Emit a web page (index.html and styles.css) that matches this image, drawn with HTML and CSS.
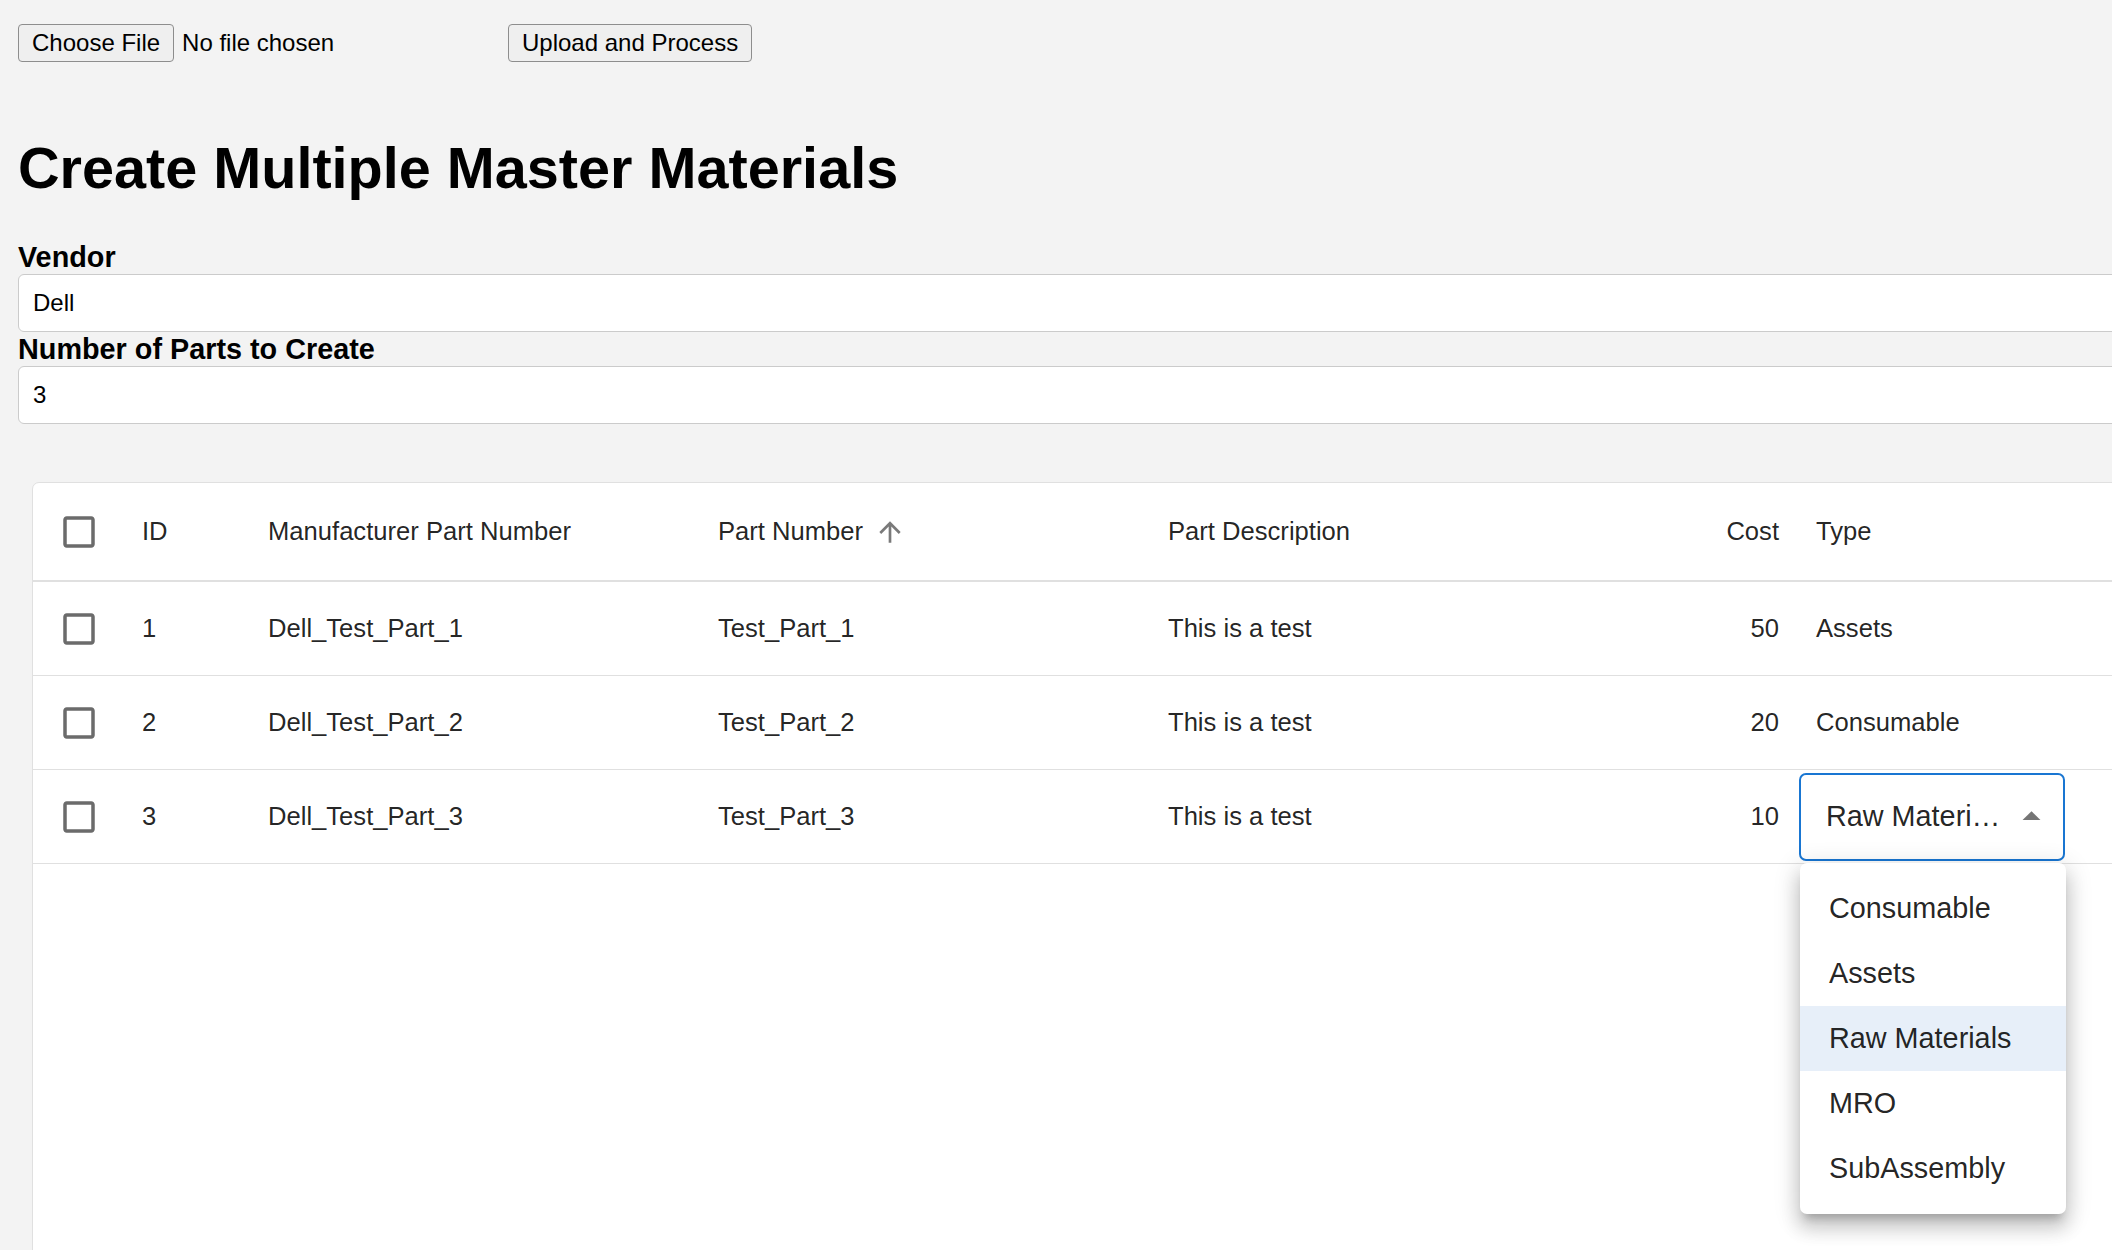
FILE: index.html
```html
<!DOCTYPE html>
<html lang="en">
<head>
<meta charset="utf-8">
<title>Create Multiple Master Materials</title>
<link rel="stylesheet" href="styles.css">
</head>
<body>
<div class="page">
  <form class="upload">
    <div class="file">
      <button type="button" class="btn">Choose File</button>
      <span class="file-status">No file chosen</span>
    </div>
    <button type="button" class="btn">Upload and Process</button>
  </form>

  <h1 class="title">Create Multiple Master Materials</h1>

  <div class="field">
    <label class="label">Vendor</label>
    <div class="input">Dell</div>
  </div>
  <div class="field">
    <label class="label">Number of Parts to Create</label>
    <div class="input">3</div>
  </div>

  <div class="grid">
    <div class="row header">
      <div class="cell check"><svg class="cb" viewBox="0 0 24 24"><path d="M19 5v14H5V5h14m0-2H5c-1.11 0-2 .9-2 2v14c0 1.1.89 2 2 2h14c1.1 0 2-.9 2-2V5c0-1.1-.9-2-2-2z"/></svg></div>
      <div class="cell">ID</div>
      <div class="cell">Manufacturer Part Number</div>
      <div class="cell">Part Number<svg class="sort" viewBox="0 0 24 24"><path d="M4 12l1.41 1.41L11 7.83V20h2V7.83l5.58 5.59L20 12l-8-8-8 8z"/></svg></div>
      <div class="cell">Part Description</div>
      <div class="cell num">Cost</div>
      <div class="cell">Type</div>
    </div>

    <div class="row">
      <div class="cell check"><svg class="cb" viewBox="0 0 24 24"><path d="M19 5v14H5V5h14m0-2H5c-1.11 0-2 .9-2 2v14c0 1.1.89 2 2 2h14c1.1 0 2-.9 2-2V5c0-1.1-.9-2-2-2z"/></svg></div>
      <div class="cell">1</div>
      <div class="cell">Dell_Test_Part_1</div>
      <div class="cell">Test_Part_1</div>
      <div class="cell">This is a test</div>
      <div class="cell num">50</div>
      <div class="cell">Assets</div>
    </div>

    <div class="row">
      <div class="cell check"><svg class="cb" viewBox="0 0 24 24"><path d="M19 5v14H5V5h14m0-2H5c-1.11 0-2 .9-2 2v14c0 1.1.89 2 2 2h14c1.1 0 2-.9 2-2V5c0-1.1-.9-2-2-2z"/></svg></div>
      <div class="cell">2</div>
      <div class="cell">Dell_Test_Part_2</div>
      <div class="cell">Test_Part_2</div>
      <div class="cell">This is a test</div>
      <div class="cell num">20</div>
      <div class="cell">Consumable</div>
    </div>

    <div class="row">
      <div class="cell check"><svg class="cb" viewBox="0 0 24 24"><path d="M19 5v14H5V5h14m0-2H5c-1.11 0-2 .9-2 2v14c0 1.1.89 2 2 2h14c1.1 0 2-.9 2-2V5c0-1.1-.9-2-2-2z"/></svg></div>
      <div class="cell">3</div>
      <div class="cell">Dell_Test_Part_3</div>
      <div class="cell">Test_Part_3</div>
      <div class="cell">This is a test</div>
      <div class="cell num">10</div>
      <div class="cell edit">
        <div class="select-wrap">
          <div class="select">
            <span class="select-value">Raw Materi…</span>
            <svg class="drop" viewBox="0 0 24 24"><path d="m7 14 5-5 5 5z"/></svg>
          </div>
          <ul class="menu">
            <li class="item">Consumable</li>
            <li class="item">Assets</li>
            <li class="item selected">Raw Materials</li>
            <li class="item">MRO</li>
            <li class="item">SubAssembly</li>
          </ul>
        </div>
      </div>
    </div>
  </div>
</div>
</body>
</html>
```

FILE: styles.css
```css
html, body {
  margin: 0;
  padding: 0;
  overflow: hidden;
  background: #f3f3f3;
}

body {
  font-family: "Liberation Sans", Arial, Helvetica, sans-serif;
  color: #000;
}

.page {
  width: 2240px;
  padding: 24px 0 0 18px;
}

/* upload row */
.upload {
  display: flex;
  align-items: center;
  margin: 0;
}

.file {
  width: 490px;
  display: flex;
  align-items: center;
  gap: 8px;
}

.btn {
  font-family: "Liberation Sans", Arial, sans-serif;
  font-size: 24px;
  line-height: 28px;
  height: 38px;
  padding: 0 13px;
  color: #000;
  background: #efefef;
  border: 1px solid #8d8d8d;
  border-radius: 4px;
  cursor: default;
}

.file-status {
  font-size: 24px;
  line-height: 28px;
}

/* title */
.title {
  font-size: 57.6px;
  line-height: 64px;
  font-weight: bold;
  margin: 74px 0 40px;
}

/* fields */
.field {
  display: flex;
  flex-direction: column;
}

.label {
  font-size: 28.8px;
  font-weight: bold;
  line-height: 34px;
  height: 34px;
}

.input {
  box-sizing: border-box;
  height: 58px;
  display: flex;
  align-items: center;
  padding: 0 14px;
  font-size: 24px;
  background: #fff;
  border: 1px solid #cbcbcb;
  border-radius: 6px;
}

/* data grid */
.grid {
  margin: 58px 0 0 14px;
  height: 900px;
  background: #fff;
  border: 1px solid #e0e0e0;
  border-radius: 7px;
  font-size: 25.6px;
  color: rgba(0, 0, 0, 0.87);
}

.row {
  box-sizing: border-box;
  display: grid;
  grid-template-columns: 91px 126px 450px 450px 450px 198px 270px;
  height: 94px;
  border-bottom: 1px solid #e0e0e0;
}

.row.header {
  height: 99px;
  border-bottom: 2px solid #e0e0e0;
}

.cell {
  display: flex;
  align-items: center;
  padding: 0 18px;
  white-space: nowrap;
}

.cell.check {
  justify-content: center;
  padding: 0;
}

.cell.num {
  justify-content: flex-end;
  padding-right: 19px;
}

.cb {
  width: 42px;
  height: 42px;
  fill: #6b6b6b;
}

.sort {
  width: 32px;
  height: 32px;
  margin-left: 11px;
  fill: #7a7a7a;
}

/* editing select */
.cell.edit {
  padding: 0 0 0 1px;
}

.select-wrap {
  position: relative;
}

.select {
  box-sizing: border-box;
  width: 266px;
  height: 88px;
  display: flex;
  align-items: center;
  padding: 0 10px 0 25px;
  border: 2.5px solid #1976d2;
  border-radius: 7px;
  background: #fff;
  font-size: 28.8px;
}

.select-value {
  white-space: nowrap;
}

.drop {
  width: 43px;
  height: 43px;
  margin-left: auto;
  fill: #757575;
}

.menu {
  position: absolute;
  top: calc(100% + 2px);
  left: 1px;
  width: 266px;
  margin: 0;
  padding: 13px 0;
  list-style: none;
  background: #fff;
  border-radius: 7px;
  box-shadow:
    0 9px 9px -5px rgba(0, 0, 0, 0.2),
    0 14px 18px 2px rgba(0, 0, 0, 0.14),
    0 5px 25px 4px rgba(0, 0, 0, 0.12);
}

.item {
  height: 65px;
  display: flex;
  align-items: center;
  padding: 0 29px;
  font-size: 28.8px;
  color: rgba(0, 0, 0, 0.87);
}

.item.selected {
  background: #e7eff9;
}
```
